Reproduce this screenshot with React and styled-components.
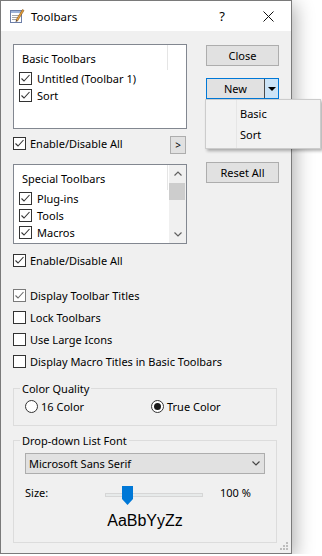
import React from 'react'
import styled, { createGlobalStyle } from 'styled-components'

const GlobalStyle = createGlobalStyle`
  html, body {
    margin: 0;
    padding: 0;
    background: #fff;
  }
  body {
    font-family: "Noto Sans", "Segoe UI", sans-serif;
    font-size: 11px;
    color: #000;
  }
  * {
    box-sizing: border-box;
  }
`;

const Window = styled.div`
  position: relative;
  width: 292px;
  height: 554px;
  border: 1px solid #7a7a7a;
  background: #f0f0f0;
  box-shadow: 3px 4px 18px rgba(0, 0, 0, 0.32);
  display: flex;
  flex-direction: column;
`;

const TitleBar = styled.div`
  height: 30px;
  flex-shrink: 0;
  background: #fff;
  display: flex;
  align-items: center;
  padding-left: 8px;
  padding-right: 17px;
`;

const Title = styled.span`
  margin-left: 6px;
  font-size: 11.5px;
`;

const HelpGlyph = styled.span`
  margin-left: auto;
  margin-right: 38px;
  font-size: 13px;
`;

const Body = styled.div`
  flex: 1;
  padding: 13px 12px 0 12px;
`;

const TopArea = styled.div`
  display: flex;
  align-items: flex-start;
  gap: 19px;
`;

const LeftCol = styled.div`
  width: 174px;
  display: flex;
  flex-direction: column;
`;

const RightCol = styled.div`
  width: 73px;
  display: flex;
  flex-direction: column;
`;

const ListBox = styled.div`
  height: ${p => p.$h}px;
  margin-top: ${p => p.$mt || 0}px;
  border: 1px solid #828790;
  background: #fff;
  display: flex;
`;

const ListContent = styled.div`
  flex: 1;
`;

const ListHeader = styled.div`
  width: 154px;
  height: 25px;
  border-right: 1px solid #e5e5e5;
  padding: 4px 0 0 8px;
  line-height: 20px;
`;

const ListItem = styled.div`
  height: 17px;
  display: flex;
  align-items: center;
  gap: 5px;
  padding-left: 5px;
`;

const ScrollBar = styled.div`
  width: 17px;
  display: flex;
  flex-direction: column;
  background: #f0f0f0;
`;

const ScrollArrow = styled.div`
  height: 17px;
  display: flex;
  align-items: center;
  justify-content: center;
`;

const ScrollThumb = styled.div`
  height: 17px;
  margin: 1px 1px 0 0;
  background: #cdcdcd;
`;

const ScrollTrack = styled.div`
  flex: 1;
`;

const ControlRow = styled.div`
  display: flex;
  align-items: flex-start;
  justify-content: space-between;
  margin-top: ${p => p.$mt}px;
  padding-right: 1px;
`;

const CheckLabel = styled.label`
  display: flex;
  align-items: center;
  gap: 4px;
  height: 13px;
  line-height: 13px;
  margin-top: ${p => p.$mt || 0}px;
`;

const Box = styled.span`
  width: 13px;
  height: 13px;
  flex-shrink: 0;
  border: 1px solid ${p => (p.$dim ? '#7a7a7a' : '#333')};
  background: #fff;
  display: flex;
  align-items: center;
  justify-content: center;
`;

const SmallButton = styled.div`
  width: 16px;
  height: 18px;
  border: 1px solid #adadad;
  background: #e1e1e1;
  display: flex;
  align-items: center;
  justify-content: center;
  font-size: 10px;
`;

const PushButton = styled.div`
  height: 21px;
  margin-top: ${p => p.$mt}px;
  border: 1px solid #adadad;
  background: #e1e1e1;
  display: flex;
  align-items: center;
  justify-content: center;
`;

const SplitButton = styled.div`
  position: relative;
  height: 21px;
  margin-top: 12px;
  border: 1px solid #0078d7;
  display: flex;
`;

const SplitMain = styled.div`
  flex: 1;
  background: #e1e1e1;
  display: flex;
  align-items: center;
  justify-content: center;
`;

const SplitArrow = styled.div`
  width: 14px;
  border-left: 1px solid #4a4a4a;
  background: #cce4f7;
  display: flex;
  align-items: center;
  justify-content: center;
`;

const Menu = styled.div`
  position: absolute;
  top: calc(100% + 1px);
  left: -2px;
  width: 116px;
  z-index: 2;
  padding: 3px 0;
  border: 1px solid #cccccc;
  background:
    linear-gradient(to right, transparent 30px, #e6e6e6 30px, #e6e6e6 31px, transparent 31px),
    #f2f2f2;
  box-shadow: 2px 2px 3px rgba(0, 0, 0, 0.3);
`;

const MenuItem = styled.div`
  height: 21px;
  line-height: 21px;
  padding-left: 34px;
`;

const OptionList = styled.div`
  margin-top: 17px;
  display: flex;
  flex-direction: column;
`;

const OptionRow = styled.div`
  height: 22px;
  display: flex;
  align-items: center;
`;

const Group = styled.fieldset`
  margin: ${p => p.$mt}px 0 0 0;
  width: 264px;
  border: 1px solid #dcdcdc;
  padding: ${p => p.$pad};
  min-width: 0;
`;

const Legend = styled.legend`
  padding: 0 2px;
  margin-left: -5px;
  line-height: 17px;
`;

const RadioRow = styled.div`
  display: grid;
  grid-template-columns: 126px 1fr;
  height: 16px;
  align-items: center;
`;

const RadioLabel = styled.label`
  display: flex;
  align-items: center;
  gap: 3px;
`;

const RadioCircle = styled.span`
  width: 13px;
  height: 13px;
  border: 1px solid #333;
  border-radius: 50%;
  background: #fff;
  display: flex;
  align-items: center;
  justify-content: center;
  &::after {
    content: '';
    display: ${p => (p.$on ? 'block' : 'none')};
    width: 7px;
    height: 7px;
    border-radius: 50%;
    background: #1a1a1a;
  }
`;

const Select = styled.div`
  height: 21px;
  border: 1px solid #adadad;
  background: #e1e1e1;
  display: flex;
  align-items: center;
  justify-content: space-between;
  padding: 0 4px 0 3px;
`;

const SizeRow = styled.div`
  margin-top: 12px;
  height: 19px;
  display: grid;
  grid-template-columns: 80px 98px 1fr;
  line-height: 14px;
`;

const Slider = styled.div`
  position: relative;
  height: 19px;
`;

const SliderTrack = styled.div`
  margin-top: 7px;
  height: 4px;
  border: 1px solid #d6d6d6;
  background: #e7eaea;
`;

const SliderThumb = styled.svg`
  position: absolute;
  left: 17px;
  top: 0;
`;

const Percent = styled.span`
  padding-left: 17px;
`;

const Sample = styled.div`
  margin-top: 5px;
  text-align: center;
  font-family: "Liberation Sans", Arial, sans-serif;
  font-size: 16px;
  line-height: 22px;
`;

const Grip = styled.svg`
  position: absolute;
  right: 2px;
  bottom: 3px;
`;

function AppIcon() {
  return (
    <svg width="16" height="16" viewBox="0 0 16 16">
      <rect x="1.5" y="2.5" width="11" height="12" fill="#fff" stroke="#6d7fa8" />
      <rect x="2" y="3" width="10" height="2" fill="#9db3d9" />
      <line x1="3" y1="7.5" x2="10" y2="7.5" stroke="#a7a7a7" />
      <line x1="3" y1="9.5" x2="9" y2="9.5" stroke="#a7a7a7" />
      <line x1="3" y1="11.5" x2="8" y2="11.5" stroke="#a7a7a7" />
      <path d="M7 12 L13.5 1.5 L15 2.5 L8.5 13 Z" fill="#e6a23a" stroke="#8a5316" strokeWidth="0.6" />
      <path d="M7 12 L8.5 13 L6.6 14 Z" fill="#3a2a1a" />
    </svg>
  );
}

function CloseIcon() {
  return (
    <svg width="11" height="11" viewBox="0 0 11 11">
      <path d="M0.5 0.5 L10.5 10.5 M10.5 0.5 L0.5 10.5" stroke="#111" strokeWidth="1" />
    </svg>
  );
}

function Check({ on = true, dim }) {
  return (
    <Box $dim={dim}>
      {on && (
        <svg width="11" height="11" viewBox="0 0 11 11">
          <polyline
            points="1.5,5.5 4,8 9.5,2"
            fill="none"
            stroke={dim ? '#6a6a6a' : '#333'}
            strokeWidth="1.1"
          />
        </svg>
      )}
    </Box>
  );
}

function Chevron({ up, color = '#606060' }) {
  return (
    <svg width="8" height="5" viewBox="0 0 8 5">
      <polyline
        points={up ? '0.5,4.5 4,1 7.5,4.5' : '0.5,0.5 4,4 7.5,0.5'}
        fill="none"
        stroke={color}
        strokeWidth="1.2"
      />
    </svg>
  );
}

const options = [
  { label: 'Display Toolbar Titles', on: true, dim: true },
  { label: 'Lock Toolbars', on: false },
  { label: 'Use Large Icons', on: false },
  { label: 'Display Macro Titles in Basic Toolbars', on: false },
];

export default function App() {
  return (
    <>
      <GlobalStyle />
      <Window>
        <TitleBar>
          <AppIcon />
          <Title>Toolbars</Title>
          <HelpGlyph>?</HelpGlyph>
          <CloseIcon />
        </TitleBar>

        <Body>
          <TopArea>
            <LeftCol>
              <ListBox $h={85}>
                <ListContent>
                  <ListHeader>Basic Toolbars</ListHeader>
                  <ListItem><Check />Untitled (Toolbar 1)</ListItem>
                  <ListItem><Check />Sort</ListItem>
                </ListContent>
              </ListBox>

              <ControlRow $mt={7}>
                <CheckLabel $mt={1}><Check />Enable/Disable All</CheckLabel>
                <SmallButton>&gt;</SmallButton>
              </ControlRow>

              <ListBox $h={80} $mt={10}>
                <ListContent>
                  <ListHeader>Special Toolbars</ListHeader>
                  <ListItem><Check />Plug-ins</ListItem>
                  <ListItem><Check />Tools</ListItem>
                  <ListItem><Check />Macros</ListItem>
                </ListContent>
                <ScrollBar>
                  <ScrollArrow><Chevron up /></ScrollArrow>
                  <ScrollThumb />
                  <ScrollTrack />
                  <ScrollArrow><Chevron /></ScrollArrow>
                </ScrollBar>
              </ListBox>

              <CheckLabel $mt={10}><Check />Enable/Disable All</CheckLabel>
            </LeftCol>

            <RightCol>
              <PushButton $mt={1}>Close</PushButton>
              <SplitButton>
                <SplitMain>New</SplitMain>
                <SplitArrow>
                  <svg width="8" height="4" viewBox="0 0 8 4">
                    <path d="M0 0 H8 L4 4 Z" fill="#000" />
                  </svg>
                </SplitArrow>
                <Menu>
                  <MenuItem>Basic</MenuItem>
                  <MenuItem>Sort</MenuItem>
                </Menu>
              </SplitButton>
              <PushButton $mt={63}>Reset All</PushButton>
            </RightCol>
          </TopArea>

          <OptionList>
            {options.map(o => (
              <OptionRow key={o.label}>
                <CheckLabel><Check on={o.on} dim={o.dim} />{o.label}</CheckLabel>
              </OptionRow>
            ))}
          </OptionList>

          <Group $mt={8} $pad="1px 11px 11px 11px">
            <Legend>Color Quality</Legend>
            <RadioRow>
              <RadioLabel><RadioCircle />16 Color</RadioLabel>
              <RadioLabel><RadioCircle $on />True Color</RadioLabel>
            </RadioRow>
          </Group>

          <Group $mt={6} $pad="4px 11px 10px 11px">
            <Legend>Drop-down List Font</Legend>
            <Select>
              <span>Microsoft Sans Serif</span>
              <Chevron color="#444" />
            </Select>
            <SizeRow>
              <span>Size:</span>
              <Slider>
                <SliderTrack />
                <SliderThumb width="11" height="19" viewBox="0 0 11 19">
                  <path d="M0 0 H11 V13 L5.5 19 L0 13 Z" fill="#0078d7" />
                </SliderThumb>
              </Slider>
              <Percent>100 %</Percent>
            </SizeRow>
            <Sample>AaBbYyZz</Sample>
          </Group>
        </Body>

        <Grip width="9" height="8" viewBox="0 0 9 8">
          <rect x="6" y="0" width="2" height="2" fill="#bdbdbd" />
          <rect x="3" y="3" width="2" height="2" fill="#bdbdbd" />
          <rect x="6" y="3" width="2" height="2" fill="#bdbdbd" />
          <rect x="0" y="6" width="2" height="2" fill="#bdbdbd" />
          <rect x="3" y="6" width="2" height="2" fill="#bdbdbd" />
          <rect x="6" y="6" width="2" height="2" fill="#bdbdbd" />
        </Grip>
      </Window>
    </>
  );
}
